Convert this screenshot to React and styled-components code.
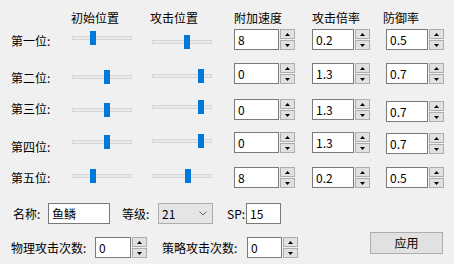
import React from "react";
import styled, { createGlobalStyle } from "styled-components";

const Global = createGlobalStyle`
  html, body { margin: 0; padding: 0; background: #f0f0f0; overflow: hidden; }
  body { width: 454px; height: 264px; }
`;

const Form = styled.div`
  width: 454px;
  height: 264px;
  box-sizing: border-box;
  padding: 10px 11px 0 11px;
  display: flex;
  flex-direction: column;
  background: #f0f0f0;
  color: #000;
  font-family: "Noto Sans CJK SC", "Microsoft YaHei", sans-serif;
  font-size: 12px;
  line-height: 16px;
`;

const Grid = styled.div`
  display: grid;
  grid-template-columns: 61px 80px 82px 78px 74px 58px;
  grid-template-rows: 19px 34px 36px 33px 35px 36px;
  align-items: start;
`;

const Header = styled.div`
  margin-left: ${(p) => p.$shift || 0}px;
  white-space: nowrap;
`;

const RowLabel = styled.div`
  margin-top: ${(p) => p.$dy}px;
  white-space: nowrap;
`;

const SliderBox = styled.div`
  position: relative;
  width: 60px;
  height: 14px;
  margin-top: ${(p) => p.$dy}px;
`;

const Track = styled.div`
  box-sizing: border-box;
  margin-top: 5px;
  height: 4px;
  border: 1px solid #d6d6d6;
  background: #e7eaea;
`;

const Thumb = styled.div`
  position: absolute;
  top: 0;
  width: 6px;
  height: 14px;
  background: #0078d7;
`;

const SpinWrap = styled.div`
  display: flex;
  gap: 1px;
  margin-top: ${(p) => p.$dy || 0}px;
`;

const Field = styled.div`
  box-sizing: border-box;
  width: ${(p) => p.$w}px;
  height: 21px;
  border: 1px solid #7a7a7a;
  background: #fff;
  padding: 0 3px;
  line-height: 19px;
  white-space: nowrap;
`;

const SpinButtons = styled.div`
  display: flex;
  flex-direction: column;
  gap: 1px;
`;

const SpinBtn = styled.div`
  box-sizing: border-box;
  width: 15px;
  height: 10px;
  border: 1px solid #adadad;
  background: #e1e1e1;
  display: flex;
  align-items: center;
  justify-content: center;
`;

const Bottom = styled.div`
  display: flex;
  flex-direction: column;
  gap: 8px;
`;

const RowA = styled.div`
  display: flex;
  align-items: center;
  height: 21px;
`;

const RowB = styled.div`
  display: flex;
  align-items: flex-start;
`;

const Group = styled.div`
  display: flex;
  align-items: center;
  margin-top: 5px;
`;

const Label = styled.div`
  width: ${(p) => p.$w}px;
  margin-left: ${(p) => p.$ml || 0}px;
  white-space: nowrap;
  flex-shrink: 0;
`;

const Combo = styled.div`
  box-sizing: border-box;
  width: 55px;
  height: 21px;
  border: 1px solid #adadad;
  background: #e5e5e5;
  padding: 0 5px 0 3px;
  display: flex;
  align-items: center;
  justify-content: space-between;
`;

const ApplyButton = styled.div`
  box-sizing: border-box;
  margin-left: auto;
  width: 73px;
  height: 22px;
  border: 1px solid #adadad;
  background: #e1e1e1;
  display: flex;
  align-items: center;
  justify-content: center;
`;

const Arrow = ({ up }) => (
  <svg width="5" height="3" viewBox="0 0 5 3">
    <polygon points={up ? "0,3 5,3 2.5,0" : "0,0 5,0 2.5,3"} fill="#000" />
  </svg>
);

const Spin = ({ value, w, dy }) => (
  <SpinWrap $dy={dy}>
    <Field $w={w}>{value}</Field>
    <SpinButtons>
      <SpinBtn>
        <Arrow up />
      </SpinBtn>
      <SpinBtn>
        <Arrow />
      </SpinBtn>
    </SpinButtons>
  </SpinWrap>
);

const Slider = ({ pos, dy }) => (
  <SliderBox $dy={dy}>
    <Track />
    <Thumb style={{ left: pos }} />
  </SliderBox>
);

const rows = [
  { name: "第一位:", ldy: 4, s1: [18, 2], s2: [32, 6], v: ["8", "0.2", "0.5"], sdy: [0, 0, 0] },
  { name: "第二位:", ldy: 7, s1: [32, 7], s2: [46, 6], v: ["0", "1.3", "0.7"], sdy: [0, 0, 0] },
  { name: "第三位:", ldy: 2, s1: [32, 4], s2: [46, 1], v: ["0", "1.3", "0.7"], sdy: [0, 0, 2] },
  { name: "第四位:", ldy: 7, s1: [32, 3], s2: [46, 2], v: ["0", "1.3", "0.7"], sdy: [0, 0, 1] },
  { name: "第五位:", ldy: 3, s1: [18, 2], s2: [33, 2], v: ["8", "0.2", "0.5"], sdy: [0, 0, 0] },
];

const widths = [45, 42, 42];

export default function App() {
  return (
    <>
      <Global />
      <Form>
        <Grid>
          <div />
          <Header $shift={-1}>初始位置</Header>
          <Header $shift={-2}>攻击位置</Header>
          <Header>附加速度</Header>
          <Header>攻击倍率</Header>
          <Header $shift={-3}>防御率</Header>
          {rows.map((r) => (
            <React.Fragment key={r.name}>
              <RowLabel $dy={r.ldy}>{r.name}</RowLabel>
              <Slider pos={r.s1[0]} dy={r.s1[1]} />
              <Slider pos={r.s2[0]} dy={r.s2[1]} />
              {r.v.map((val, i) => (
                <Spin key={i} value={val} w={widths[i]} dy={r.sdy[i]} />
              ))}
            </React.Fragment>
          ))}
        </Grid>
        <Bottom>
          <RowA>
            <Label $w={35} $ml={2}>名称:</Label>
            <Field $w={62}>鱼鳞</Field>
            <Label $w={36} $ml={12}>等级:</Label>
            <Combo>
              <span>21</span>
              <svg width="8" height="5" viewBox="0 0 8 5">
                <polyline points="0.5,0.5 4,4 7.5,0.5" fill="none" stroke="#606060" strokeWidth="1" />
              </svg>
            </Combo>
            <Label $w={19} $ml={14}>SP:</Label>
            <Field $w={35}>15</Field>
          </RowA>
          <RowB>
            <Group>
              <Label $w={84}>物理攻击次数:</Label>
              <Spin value="0" w={36} />
              <Label $w={85} $ml={15}>策略攻击次数:</Label>
              <Spin value="0" w={35} />
            </Group>
            <ApplyButton>应用</ApplyButton>
          </RowB>
        </Bottom>
      </Form>
    </>
  );
}
